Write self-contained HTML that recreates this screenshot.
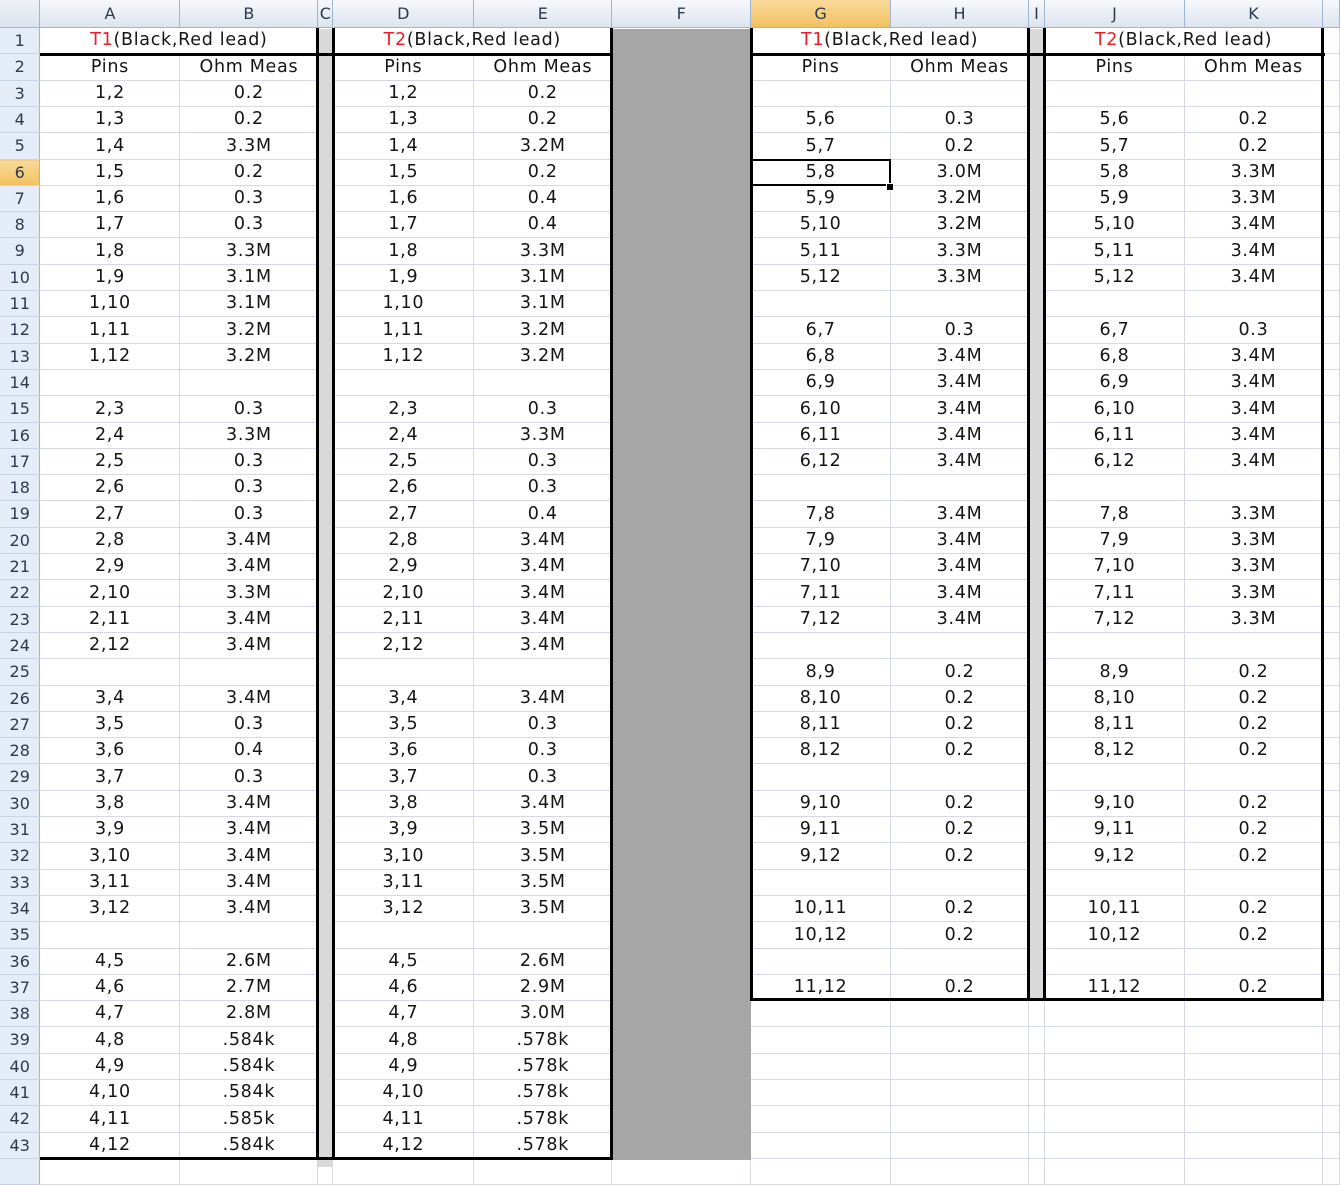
<!DOCTYPE html>
<html><head><meta charset="utf-8"><style>
html,body{margin:0;padding:0;background:#fff;width:1340px;height:1167px;overflow:hidden}
table{border-collapse:collapse;table-layout:fixed;position:absolute;left:0;top:0;font-family:"DejaVu Sans","Liberation Sans",sans-serif;font-size:17.5px;color:#151515;letter-spacing:0.7px}
td{border-right:1px solid #d5d9e3;border-bottom:1px solid #d5d9e3;text-align:center;padding:0;height:25px;white-space:nowrap;overflow:hidden;line-height:25px}
tr.t td{height:26px;line-height:26px}
td.rh{background:#e4ecf7;color:#2c3a4d;font-size:16px;border-right:1px solid #9eb6ce;border-bottom:1px solid #c5d3e3;letter-spacing:0}
tr.hd td{height:27px;line-height:27px;background:linear-gradient(#f6f8fb,#dde4ee);color:#2c3a4d;border-right:1px solid #9eb6ce;border-bottom:1px solid #9eb6ce;font-size:16px;letter-spacing:0}
tr.hd td.sel{background:linear-gradient(#f9d99b,#f1c15f)}
td.rsel{background:linear-gradient(#f9d99b,#f1c15f)!important}
.r{color:#e8202a}
.b{position:absolute;background:#000}
.g{position:absolute}
</style></head><body>
<table>
<colgroup><col style="width:40px"><col style="width:140px"><col style="width:138px"><col style="width:15px"><col style="width:141px"><col style="width:138px"><col style="width:139px"><col style="width:140px"><col style="width:138px"><col style="width:16px"><col style="width:140px"><col style="width:138px"><col style="width:17px"></colgroup>
<tr class="hd"><td style="background:linear-gradient(#eef2f7,#dce3ec)"></td><td>A</td><td>B</td><td>C</td><td>D</td><td>E</td><td>F</td><td class="sel">G</td><td>H</td><td>I</td><td>J</td><td>K</td><td></td></tr>
<tr><td class="rh">1</td><td colspan="2"><span class="r">T1</span>(Black,Red lead)</td><td></td><td colspan="2"><span class="r">T2</span>(Black,Red lead)</td><td></td><td colspan="2"><span class="r">T1</span>(Black,Red lead)</td><td></td><td colspan="2"><span class="r">T2</span>(Black,Red lead)</td><td></td></tr>
<tr class="t"><td class="rh">2</td><td>Pins</td><td>Ohm Meas</td><td></td><td>Pins</td><td>Ohm Meas</td><td></td><td>Pins</td><td>Ohm Meas</td><td></td><td>Pins</td><td>Ohm Meas</td><td></td></tr>
<tr><td class="rh">3</td><td>1,2</td><td>0.2</td><td></td><td>1,2</td><td>0.2</td><td></td><td></td><td></td><td></td><td></td><td></td><td></td></tr>
<tr><td class="rh">4</td><td>1,3</td><td>0.2</td><td></td><td>1,3</td><td>0.2</td><td></td><td>5,6</td><td>0.3</td><td></td><td>5,6</td><td>0.2</td><td></td></tr>
<tr class="t"><td class="rh">5</td><td>1,4</td><td>3.3M</td><td></td><td>1,4</td><td>3.2M</td><td></td><td>5,7</td><td>0.2</td><td></td><td>5,7</td><td>0.2</td><td></td></tr>
<tr><td class="rh rsel">6</td><td>1,5</td><td>0.2</td><td></td><td>1,5</td><td>0.2</td><td></td><td>5,8</td><td>3.0M</td><td></td><td>5,8</td><td>3.3M</td><td></td></tr>
<tr><td class="rh">7</td><td>1,6</td><td>0.3</td><td></td><td>1,6</td><td>0.4</td><td></td><td>5,9</td><td>3.2M</td><td></td><td>5,9</td><td>3.3M</td><td></td></tr>
<tr><td class="rh">8</td><td>1,7</td><td>0.3</td><td></td><td>1,7</td><td>0.4</td><td></td><td>5,10</td><td>3.2M</td><td></td><td>5,10</td><td>3.4M</td><td></td></tr>
<tr class="t"><td class="rh">9</td><td>1,8</td><td>3.3M</td><td></td><td>1,8</td><td>3.3M</td><td></td><td>5,11</td><td>3.3M</td><td></td><td>5,11</td><td>3.4M</td><td></td></tr>
<tr><td class="rh">10</td><td>1,9</td><td>3.1M</td><td></td><td>1,9</td><td>3.1M</td><td></td><td>5,12</td><td>3.3M</td><td></td><td>5,12</td><td>3.4M</td><td></td></tr>
<tr><td class="rh">11</td><td>1,10</td><td>3.1M</td><td></td><td>1,10</td><td>3.1M</td><td></td><td></td><td></td><td></td><td></td><td></td><td></td></tr>
<tr class="t"><td class="rh">12</td><td>1,11</td><td>3.2M</td><td></td><td>1,11</td><td>3.2M</td><td></td><td>6,7</td><td>0.3</td><td></td><td>6,7</td><td>0.3</td><td></td></tr>
<tr><td class="rh">13</td><td>1,12</td><td>3.2M</td><td></td><td>1,12</td><td>3.2M</td><td></td><td>6,8</td><td>3.4M</td><td></td><td>6,8</td><td>3.4M</td><td></td></tr>
<tr><td class="rh">14</td><td></td><td></td><td></td><td></td><td></td><td></td><td>6,9</td><td>3.4M</td><td></td><td>6,9</td><td>3.4M</td><td></td></tr>
<tr class="t"><td class="rh">15</td><td>2,3</td><td>0.3</td><td></td><td>2,3</td><td>0.3</td><td></td><td>6,10</td><td>3.4M</td><td></td><td>6,10</td><td>3.4M</td><td></td></tr>
<tr><td class="rh">16</td><td>2,4</td><td>3.3M</td><td></td><td>2,4</td><td>3.3M</td><td></td><td>6,11</td><td>3.4M</td><td></td><td>6,11</td><td>3.4M</td><td></td></tr>
<tr><td class="rh">17</td><td>2,5</td><td>0.3</td><td></td><td>2,5</td><td>0.3</td><td></td><td>6,12</td><td>3.4M</td><td></td><td>6,12</td><td>3.4M</td><td></td></tr>
<tr><td class="rh">18</td><td>2,6</td><td>0.3</td><td></td><td>2,6</td><td>0.3</td><td></td><td></td><td></td><td></td><td></td><td></td><td></td></tr>
<tr class="t"><td class="rh">19</td><td>2,7</td><td>0.3</td><td></td><td>2,7</td><td>0.4</td><td></td><td>7,8</td><td>3.4M</td><td></td><td>7,8</td><td>3.3M</td><td></td></tr>
<tr><td class="rh">20</td><td>2,8</td><td>3.4M</td><td></td><td>2,8</td><td>3.4M</td><td></td><td>7,9</td><td>3.4M</td><td></td><td>7,9</td><td>3.3M</td><td></td></tr>
<tr><td class="rh">21</td><td>2,9</td><td>3.4M</td><td></td><td>2,9</td><td>3.4M</td><td></td><td>7,10</td><td>3.4M</td><td></td><td>7,10</td><td>3.3M</td><td></td></tr>
<tr class="t"><td class="rh">22</td><td>2,10</td><td>3.3M</td><td></td><td>2,10</td><td>3.4M</td><td></td><td>7,11</td><td>3.4M</td><td></td><td>7,11</td><td>3.3M</td><td></td></tr>
<tr><td class="rh">23</td><td>2,11</td><td>3.4M</td><td></td><td>2,11</td><td>3.4M</td><td></td><td>7,12</td><td>3.4M</td><td></td><td>7,12</td><td>3.3M</td><td></td></tr>
<tr><td class="rh">24</td><td>2,12</td><td>3.4M</td><td></td><td>2,12</td><td>3.4M</td><td></td><td></td><td></td><td></td><td></td><td></td><td></td></tr>
<tr class="t"><td class="rh">25</td><td></td><td></td><td></td><td></td><td></td><td></td><td>8,9</td><td>0.2</td><td></td><td>8,9</td><td>0.2</td><td></td></tr>
<tr><td class="rh">26</td><td>3,4</td><td>3.4M</td><td></td><td>3,4</td><td>3.4M</td><td></td><td>8,10</td><td>0.2</td><td></td><td>8,10</td><td>0.2</td><td></td></tr>
<tr><td class="rh">27</td><td>3,5</td><td>0.3</td><td></td><td>3,5</td><td>0.3</td><td></td><td>8,11</td><td>0.2</td><td></td><td>8,11</td><td>0.2</td><td></td></tr>
<tr><td class="rh">28</td><td>3,6</td><td>0.4</td><td></td><td>3,6</td><td>0.3</td><td></td><td>8,12</td><td>0.2</td><td></td><td>8,12</td><td>0.2</td><td></td></tr>
<tr class="t"><td class="rh">29</td><td>3,7</td><td>0.3</td><td></td><td>3,7</td><td>0.3</td><td></td><td></td><td></td><td></td><td></td><td></td><td></td></tr>
<tr><td class="rh">30</td><td>3,8</td><td>3.4M</td><td></td><td>3,8</td><td>3.4M</td><td></td><td>9,10</td><td>0.2</td><td></td><td>9,10</td><td>0.2</td><td></td></tr>
<tr><td class="rh">31</td><td>3,9</td><td>3.4M</td><td></td><td>3,9</td><td>3.5M</td><td></td><td>9,11</td><td>0.2</td><td></td><td>9,11</td><td>0.2</td><td></td></tr>
<tr class="t"><td class="rh">32</td><td>3,10</td><td>3.4M</td><td></td><td>3,10</td><td>3.5M</td><td></td><td>9,12</td><td>0.2</td><td></td><td>9,12</td><td>0.2</td><td></td></tr>
<tr><td class="rh">33</td><td>3,11</td><td>3.4M</td><td></td><td>3,11</td><td>3.5M</td><td></td><td></td><td></td><td></td><td></td><td></td><td></td></tr>
<tr><td class="rh">34</td><td>3,12</td><td>3.4M</td><td></td><td>3,12</td><td>3.5M</td><td></td><td>10,11</td><td>0.2</td><td></td><td>10,11</td><td>0.2</td><td></td></tr>
<tr class="t"><td class="rh">35</td><td></td><td></td><td></td><td></td><td></td><td></td><td>10,12</td><td>0.2</td><td></td><td>10,12</td><td>0.2</td><td></td></tr>
<tr><td class="rh">36</td><td>4,5</td><td>2.6M</td><td></td><td>4,5</td><td>2.6M</td><td></td><td></td><td></td><td></td><td></td><td></td><td></td></tr>
<tr><td class="rh">37</td><td>4,6</td><td>2.7M</td><td></td><td>4,6</td><td>2.9M</td><td></td><td>11,12</td><td>0.2</td><td></td><td>11,12</td><td>0.2</td><td></td></tr>
<tr><td class="rh">38</td><td>4,7</td><td>2.8M</td><td></td><td>4,7</td><td>3.0M</td><td></td><td></td><td></td><td></td><td></td><td></td><td></td></tr>
<tr class="t"><td class="rh">39</td><td>4,8</td><td>.584k</td><td></td><td>4,8</td><td>.578k</td><td></td><td></td><td></td><td></td><td></td><td></td><td></td></tr>
<tr><td class="rh">40</td><td>4,9</td><td>.584k</td><td></td><td>4,9</td><td>.578k</td><td></td><td></td><td></td><td></td><td></td><td></td><td></td></tr>
<tr><td class="rh">41</td><td>4,10</td><td>.584k</td><td></td><td>4,10</td><td>.578k</td><td></td><td></td><td></td><td></td><td></td><td></td><td></td></tr>
<tr class="t"><td class="rh">42</td><td>4,11</td><td>.585k</td><td></td><td>4,11</td><td>.578k</td><td></td><td></td><td></td><td></td><td></td><td></td><td></td></tr>
<tr><td class="rh">43</td><td>4,12</td><td>.584k</td><td></td><td>4,12</td><td>.578k</td><td></td><td></td><td></td><td></td><td></td><td></td><td></td></tr>
<tr><td class="rh"></td><td></td><td></td><td></td><td></td><td></td><td></td><td></td><td></td><td></td><td></td><td></td><td></td></tr>
</table>
<div class="g" style="left:318px;top:29px;width:15px;height:1138px;background:#d9d9d9"></div>
<div class="g" style="left:612px;top:29px;width:139px;height:1131px;background:#a6a6a6"></div>
<div class="g" style="left:1029px;top:29px;width:16px;height:972px;background:#d9d9d9"></div>
<div class="b" style="left:40px;top:53px;width:572px;height:3px"></div>
<div class="b" style="left:750px;top:53px;width:575px;height:3px"></div>
<div class="b" style="left:316px;top:28px;width:3px;height:1132px"></div>
<div class="b" style="left:332px;top:28px;width:3px;height:1132px"></div>
<div class="b" style="left:610px;top:28px;width:3px;height:1132px"></div>
<div class="b" style="left:40px;top:1157px;width:573px;height:3px"></div>
<div class="b" style="left:750px;top:28px;width:3px;height:973px"></div>
<div class="b" style="left:1027px;top:28px;width:3px;height:973px"></div>
<div class="b" style="left:1043px;top:28px;width:3px;height:973px"></div>
<div class="b" style="left:1321px;top:28px;width:3px;height:973px"></div>
<div class="b" style="left:750px;top:998px;width:574px;height:3px"></div>
<div style="position:absolute;left:751px;top:159px;width:136px;height:23px;border:2px solid #000"></div>
<div class="b" style="left:886px;top:183px;width:6px;height:6px;border:1px solid #fff"></div>
</body></html>
